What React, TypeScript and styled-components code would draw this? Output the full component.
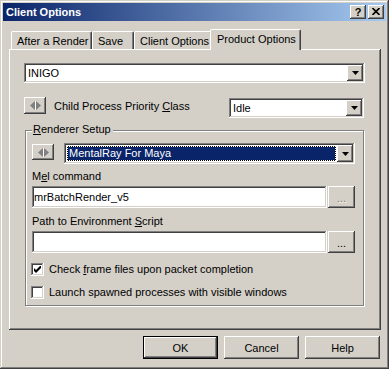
import React from "react";
import styled, { createGlobalStyle, css } from "styled-components";

const Global = createGlobalStyle`
  html, body { margin: 0; padding: 0; background: #d4d0c8; }
  body { font-family: "Liberation Sans", Arial, sans-serif; }
`;

const raised = css`
  background: #d4d0c8;
  box-shadow: inset -1px -1px #404040, inset 1px 1px #fff, inset -2px -2px #808080,
    inset 2px 2px #d4d0c8;
`;

const sunken = css`
  box-shadow: inset -1px -1px #fff, inset 1px 1px #808080, inset -2px -2px #d4d0c8,
    inset 2px 2px #404040;
`;

const Window = styled.div`
  box-sizing: border-box;
  width: 389px;
  height: 369px;
  padding: 3px;
  background: #d4d0c8;
  box-shadow: inset -1px -1px #404040, inset 1px 1px #d4d0c8, inset -2px -2px #808080,
    inset 2px 2px #fff;
  display: flex;
  flex-direction: column;
  font-family: "Liberation Sans", Arial, sans-serif;
  font-size: 11px;
  letter-spacing: 0;
  color: #000;
`;

const TitleBar = styled.div`
  height: 18px;
  display: flex;
  align-items: center;
  padding: 0 2px 0 3px;
  background: linear-gradient(to right, #0a246a, #a6caf0);
`;

const TitleText = styled.div`
  flex: 1;
  color: #fff;
  font-weight: bold;
  line-height: 13px;
`;

const TitleButtons = styled.div`
  display: flex;
  gap: 2px;
`;

const TitleButton = styled.div`
  ${raised};
  box-sizing: border-box;
  width: 16px;
  height: 14px;
  display: flex;
  align-items: center;
  justify-content: center;
  font-weight: bold;
  font-size: 11px;
  line-height: 12px;
  padding-bottom: 1px;
`;

const Body = styled.div`
  display: flex;
  flex-direction: column;
  padding: 8px 0 0 6px;
`;

const TabStrip = styled.div`
  height: 20px;
  display: flex;
  align-items: flex-end;
  padding-left: 2px;
`;

const Tab = styled.div<{ $w: number; $active?: boolean }>`
  box-sizing: border-box;
  width: ${(p) => p.$w + (p.$active ? 4 : 0)}px;
  height: ${(p) => (p.$active ? 21 : 18)}px;
  margin: 0 ${(p) => (p.$active ? -2 : 0)}px ${(p) => (p.$active ? -1 : 0)}px;
  padding: 3px 0 0 ${(p) => (p.$active ? 6 : 5)}px;
  line-height: 13px;
  white-space: nowrap;
  background: #d4d0c8;
  border-left: 1px solid #fff;
  border-top: 1px solid #fff;
  border-right: 1px solid #404040;
  border-radius: 2px 2px 0 0;
  box-shadow: inset -1px 0 #808080;
  position: relative;
  z-index: ${(p) => (p.$active ? 2 : 1)};
`;

const Panel = styled.div`
  box-sizing: border-box;
  width: 372px;
  height: 281px;
  padding: 14px 0 0 15px;
  box-shadow: inset -1px -1px #404040, inset 1px 1px #fff, inset -2px -2px #808080;
  display: flex;
  flex-direction: column;
  align-items: flex-start;
`;

const Combo = styled.div<{ $w: number; $h: number }>`
  ${sunken};
  box-sizing: border-box;
  width: ${(p) => p.$w}px;
  height: ${(p) => p.$h}px;
  padding: 2px;
  background: #fff;
  display: flex;
  flex-shrink: 0;
`;

const ComboValue = styled.div<{ $selected?: boolean }>`
  flex: 1;
  display: flex;
  align-items: center;
  padding-left: 2px;
  line-height: 13px;
  white-space: nowrap;
  ${(p) =>
    p.$selected &&
    css`
      margin: 1px;
      padding-left: 1px;
      color: #fff;
      border: 1px dotted #fff;
      background: linear-gradient(#0a246a, #0a246a) padding-box,
        linear-gradient(#000, #000) border-box;
    `}
`;

const DropButton = styled.div`
  ${raised};
  width: 16px;
  display: flex;
  align-items: center;
  justify-content: center;
`;

const Arrow = () => (
  <svg width="7" height="4" viewBox="0 0 7 4">
    <polygon points="0,0 7,0 3.5,4" fill="#000" />
  </svg>
);

const PriorityRow = styled.div`
  margin-top: 14px;
  width: 340px;
  display: flex;
  align-items: flex-start;
`;

const SpinButton = styled.div<{ $h: number; $top?: number }>`
  ${raised};
  box-sizing: border-box;
  width: 22px;
  height: ${(p) => p.$h}px;
  margin-top: ${(p) => p.$top ?? 0}px;
  display: flex;
  align-items: center;
  justify-content: center;
  flex-shrink: 0;
`;

const SpinIcon = () => (
  <svg width="11" height="9" viewBox="0 0 11 9">
    <polygon points="0,4.5 5,0 5,9" fill="#808080" />
    <polygon points="6,0 11,4.5 6,9" fill="#808080" />
    <rect x="5" y="0" width="1" height="9" fill="#fff" />
  </svg>
);

const Label = styled.div<{ $top?: number; $left?: number }>`
  line-height: 13px;
  white-space: nowrap;
  margin-top: ${(p) => p.$top ?? 0}px;
  margin-left: ${(p) => p.$left ?? 0}px;
`;

const U = styled.span`
  text-decoration: underline;
`;

const RightCombo = styled(Combo)`
  margin-left: auto;
  margin-top: 1px;
`;

const GroupBox = styled.div`
  position: relative;
  box-sizing: border-box;
  width: 339px;
  height: 176px;
  margin: 12px 0 0 1px;
  border: 1px solid #808080;
  box-shadow: inset 1px 1px #fff, 1px 1px #fff;
  padding: 12px 0 0 6px;
  display: flex;
  flex-direction: column;
  align-items: flex-start;
`;

const Legend = styled.div`
  position: absolute;
  top: -8px;
  left: 6px;
  padding: 0 2px 0 1px;
  background: #d4d0c8;
  line-height: 13px;
  white-space: nowrap;
`;

const RendererRow = styled.div`
  display: flex;
  align-items: flex-start;
  gap: 10px;
`;

const FieldRow = styled.div<{ $top: number }>`
  margin-top: ${(p) => p.$top}px;
  display: flex;
  align-items: flex-start;
  gap: 1px;
`;

const Field = styled.div`
  ${sunken};
  box-sizing: border-box;
  width: 295px;
  height: 22px;
  background: #fff;
  padding-left: 2px;
  display: flex;
  align-items: center;
  line-height: 13px;
`;

const BrowseButton = styled.div<{ $disabled?: boolean }>`
  ${raised};
  box-sizing: border-box;
  width: 27px;
  height: 22px;
  display: flex;
  align-items: center;
  justify-content: center;
  padding-top: 2px;
  color: ${(p) => (p.$disabled ? "#808080" : "#000")};
  text-shadow: ${(p) => (p.$disabled ? "1px 1px #fff" : "none")};
`;

const CheckRow = styled.label<{ $top: number }>`
  margin: ${(p) => p.$top}px 0 0 -1px;
  display: flex;
  align-items: center;
  gap: 5px;
  line-height: 13px;
  white-space: nowrap;
`;

const CheckText = styled.span`
  line-height: 13px;
`;

const CheckBox = styled.div`
  ${sunken};
  box-sizing: border-box;
  width: 13px;
  height: 13px;
  background: #fff;
  display: flex;
  align-items: center;
  justify-content: center;
`;

const CheckMark = () => (
  <svg width="7" height="7" viewBox="0 0 7 7">
    <path d="M0 2 L2 4 L7 -1 L7 2 L2 7 L0 5 Z" fill="#000" />
  </svg>
);

const ButtonRow = styled.div`
  width: 372px;
  margin-top: 6px;
  padding-right: 1px;
  box-sizing: border-box;
  display: flex;
  justify-content: flex-end;
  gap: 6px;
`;

const PushButton = styled.div<{ $default?: boolean }>`
  box-sizing: border-box;
  width: 75px;
  height: 23px;
  display: flex;
  align-items: center;
  justify-content: center;
  background: #d4d0c8;
  box-shadow: ${(p) =>
    p.$default
      ? "inset 0 0 0 1px #000, inset -2px -2px #404040, inset 2px 2px #fff, inset -3px -3px #808080"
      : "inset -1px -1px #404040, inset 1px 1px #fff, inset -2px -2px #808080"};
`;

const CloseGlyph = () => (
  <svg width="8" height="7" viewBox="0 0 8 7">
    <path d="M0.5 0 L7.5 7 M7.5 0 L0.5 7" stroke="#000" strokeWidth="1.6" />
  </svg>
);

export default function App() {
  return (
    <>
      <Global />
      <Window>
        <TitleBar>
          <TitleText>Client Options</TitleText>
          <TitleButtons>
            <TitleButton>?</TitleButton>
            <TitleButton>
              <CloseGlyph />
            </TitleButton>
          </TitleButtons>
        </TitleBar>
        <Body>
          <TabStrip>
            <Tab $w={81}>After a Render</Tab>
            <Tab $w={42}>Save</Tab>
            <Tab $w={78}>Client Options</Tab>
            <Tab $w={87} $active>
              Product Options
            </Tab>
          </TabStrip>
          <Panel>
            <Combo $w={341} $h={20}>
              <ComboValue>INIGO</ComboValue>
              <DropButton>
                <Arrow />
              </DropButton>
            </Combo>
            <PriorityRow>
              <SpinButton $h={17}>
                <SpinIcon />
              </SpinButton>
              <Label $top={3} $left={8}>
                Child Process Priority <U>C</U>lass
              </Label>
              <RightCombo $w={135} $h={20}>
                <ComboValue>Idle</ComboValue>
                <DropButton>
                  <Arrow />
                </DropButton>
              </RightCombo>
            </PriorityRow>
            <GroupBox>
              <Legend>
                <U>R</U>enderer Setup
              </Legend>
              <RendererRow>
                <SpinButton $h={16} $top={1}>
                  <SpinIcon />
                </SpinButton>
                <Combo $w={291} $h={21}>
                  <ComboValue $selected>MentalRay For Maya</ComboValue>
                  <DropButton>
                    <Arrow />
                  </DropButton>
                </Combo>
              </RendererRow>
              <Label $top={6}>
                M<U>e</U>l command
              </Label>
              <FieldRow $top={3}>
                <Field>mrBatchRender_v5</Field>
                <BrowseButton $disabled>...</BrowseButton>
              </FieldRow>
              <Label $top={7}>
                Path to Environment <U>S</U>cript
              </Label>
              <FieldRow $top={3}>
                <Field />
                <BrowseButton>...</BrowseButton>
              </FieldRow>
              <CheckRow $top={10}>
                <CheckBox>
                  <CheckMark />
                </CheckBox>
                <CheckText>
                  Check <U>f</U>rame files upon packet completion
                </CheckText>
              </CheckRow>
              <CheckRow $top={10}>
                <CheckBox />
                <CheckText>Launch spawned processes with visible windows</CheckText>
              </CheckRow>
            </GroupBox>
          </Panel>
          <ButtonRow>
            <PushButton $default>OK</PushButton>
            <PushButton>Cancel</PushButton>
            <PushButton>Help</PushButton>
          </ButtonRow>
        </Body>
      </Window>
    </>
  );
}
